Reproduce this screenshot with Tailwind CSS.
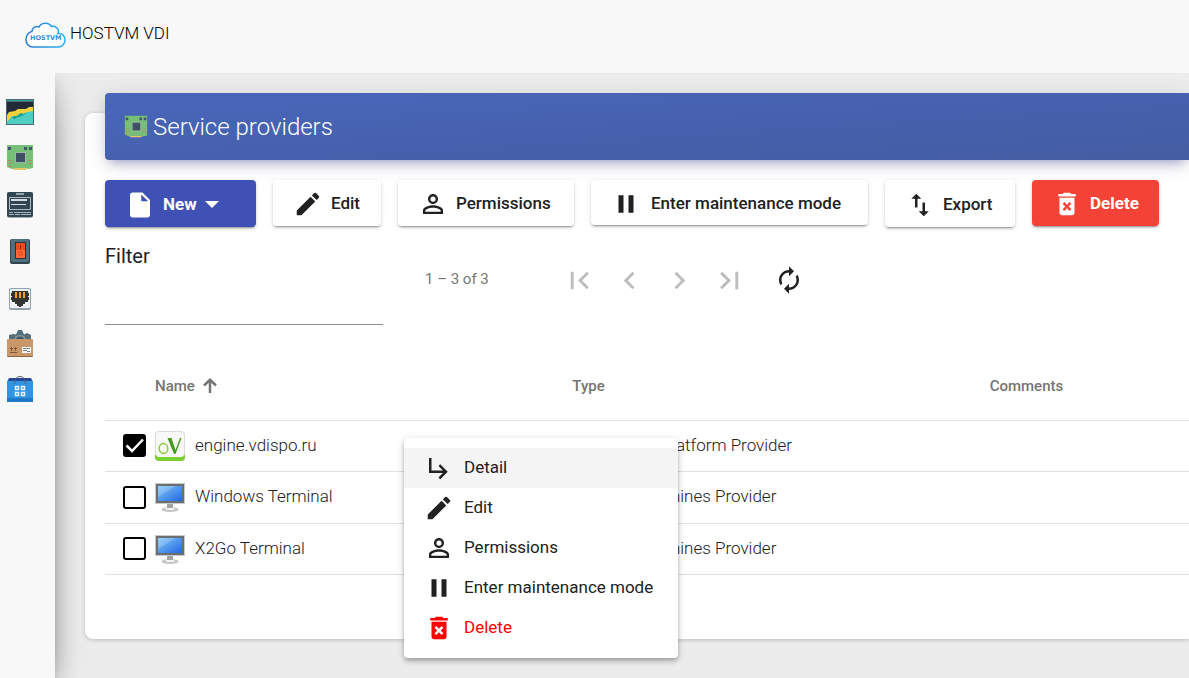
<!DOCTYPE html>
<html lang="en">
<head>
<meta charset="utf-8">
<meta name="viewport" content="width=device-width, initial-scale=1">
<title>HOSTVM VDI</title>
<script src="https://cdn.jsdelivr.net/npm/@tailwindcss/browser@4"></script>
</head>
<body class="flex min-h-screen flex-col overflow-x-hidden bg-[#f8f8f8] font-['Roboto',sans-serif] text-[17px] font-light text-[#212121]">

<!-- Shared symbols -->
<svg class="hidden" aria-hidden="true">
  <symbol id="i-file" viewBox="0 0 24 24"><path d="M6 2c-1.1 0-1.99.9-1.99 2L4 20c0 1.1.89 2 1.99 2H18c1.1 0 2-.9 2-2V8l-6-6H6zm7 7V3.5L18.5 9H13z"/></symbol>
  <symbol id="i-edit" viewBox="0 0 24 24"><path d="M3 17.25V21h3.75L17.81 9.94l-3.75-3.75L3 17.25zM20.71 7.04a1 1 0 0 0 0-1.41l-2.34-2.34a1 1 0 0 0-1.41 0l-1.83 1.83 3.75 3.75 1.83-1.83z"/></symbol>
  <symbol id="i-person" viewBox="0 0 24 24"><path d="M12 5.9a2.1 2.1 0 1 1 0 4.2 2.1 2.1 0 0 1 0-4.2m0 9c2.97 0 6.1 1.46 6.1 2.1v1.1H5.9V17c0-.64 3.13-2.1 6.1-2.1M12 4C9.79 4 8 5.79 8 8s1.79 4 4 4 4-1.79 4-4-1.79-4-4-4zm0 9c-2.67 0-8 1.34-8 4v3h16v-3c0-2.66-5.33-4-8-4z"/></symbol>
  <symbol id="i-pause" viewBox="0 0 24 24"><path d="M6 19h4V5H6v14zm8-14v14h4V5h-4z"/></symbol>
  <symbol id="i-swap" viewBox="0 0 24 24"><path d="M16 17.01V10h-2v7.01h-3L15 21l4-3.99h-3zM9 3L5 6.99h3V14h2V6.99h3L9 3z"/></symbol>
  <symbol id="i-delete" viewBox="0 0 24 24"><path d="M6 19c0 1.1.9 2 2 2h8c1.1 0 2-.9 2-2V7H6v12zm2.46-7.12l1.41-1.41L12 12.59l2.12-2.12 1.41 1.41L13.41 14l2.12 2.12-1.41 1.41L12 15.41l-2.12 2.12-1.41-1.41L10.59 14l-2.13-2.12zM15.5 4l-1-1h-5l-1 1H5v2h14V4z"/></symbol>
  <symbol id="i-sub" viewBox="0 0 24 24"><path d="M19 15l-6 6-1.42-1.42L15.17 16H4V4h2v10h9.17l-3.59-3.58L13 9l6 6z"/></symbol>
  <symbol id="i-board" viewBox="0 0 28 28">
    <path d="M6 24h16l-2 2H8z" fill="#e8c56a"/>
    <path d="M1 1h26v23l-4 1-3-1H9l-3 1-5-2z" fill="#76bf77"/>
    <path d="M2 3h3v3H2zM18 3h3v3h-3zM23 3h3v3h-3z" fill="#41556b"/>
    <path d="M9 8h11v11H9z" fill="#9db8a8"/><path d="M10 9h9v9h-9z" fill="#3f5065"/>
    <path d="M2 16h4v1H2zM2 19h4v1H2zM2 22h4v1H2zM22 16h4v1h-4zM22 19h4v1h-4z" fill="#b58a6a"/>
  </symbol>
  <symbol id="i-monitor" viewBox="0 0 30 30">
    <ellipse cx="15" cy="27.500" rx="8.500" ry="2.500" fill="#c4c4c4"/><ellipse cx="15" cy="26.500" rx="4.500" ry="1.500" fill="#f3f3f3"/>
    <path d="M12 22h6v4h-6z" fill="#a2a2a2"/>
    <path d="M0 1h30v21H0z" fill="#c9c9c9"/><path d="M1 2h28v19H1z" fill="#6b6f72"/>
    <path d="M3 4h24v15H3z" fill="url(#g-screen)"/><path d="M3 4h18L3 15z" fill="#fff" opacity=".18"/>
  </symbol>
</svg>
<svg class="absolute size-0" aria-hidden="true">
  <linearGradient id="g-screen" x1="0" y1="0" x2="1" y2="1"><stop stop-color="#7fc6fb"/><stop offset="1" stop-color="#2368dd"/></linearGradient>
  <linearGradient id="g-cloud" x1="0" x2="1"><stop stop-color="#2f7bd0"/><stop offset="1" stop-color="#22b4f5"/></linearGradient>
</svg>

<header class="relative z-20 flex h-[73px] items-center gap-1 bg-[#f8f8f8] pb-1.5 pl-[25px]">
  <svg class="mt-[2px] h-[26px] w-[41px]" viewBox="0 0 41 26" role="img" aria-label="HOSTVM logo">
    <path d="M8 25C3.500 25 1 21.500 1 17.500 1 13.500 3.500 10 7 9.500 7 6 10.500 3.500 14 5 16 .5 23.500-.5 26.500 4.500 30 3.500 33.500 6 33.500 9.500c0 .8-.1 1.500-.5 2 4-.5 7 2.500 7 6.500s-3 7-7 7z" fill="#fff" stroke="url(#g-cloud)" stroke-width="1.500"/>
    <text x="5" y="18" font-family="DejaVu Sans, sans-serif" font-size="6.500" font-weight="700" fill="#2f8fe0">HOSTVM</text>
  </svg>
  <a href="#" class="text-black">HOSTVM VDI</a>
</header>

<div class="flex flex-1">
  <nav aria-label="Main" class="relative z-10 w-[55px] shrink-0 bg-[#f8f8f8] pt-[25px] pl-1.5 shadow-[0_16px_38px_-12px_rgba(0,0,0,0.56),0_4px_25px_0_rgba(0,0,0,0.12),0_8px_10px_-5px_rgba(0,0,0,0.2)]">
    <div class="flex h-[306px] flex-col justify-between">
      <a href="#" aria-label="Dashboard" class="block size-7"><svg viewBox="0 0 28 28">
        <path d="M0 1h28v26H0z" fill="#4a6670"/><path d="M1 2h26v1H1z" fill="#2fa79c"/><path d="M1 4h26v22H1z" fill="#222b35"/>
        <path d="M1 17l2-3 6-1 3-2h8l3-2h4v17H1z" fill="#f6d13c"/>
        <path d="M1 26v-2l5-6h5l3-3 3 1 4-2 6-1v13z" fill="#4fcdc2"/>
        <path d="M6 20l2-2 3 0 4-3 2 1 4-2-5 4-4 1-3 2z" fill="#1d9e8d"/>
      </svg></a>
      <a href="#" aria-label="Service providers" class="block size-7"><svg viewBox="0 0 28 28"><use href="#i-board"/></svg></a>
      <a href="#" aria-label="Authenticators" class="block size-7"><svg viewBox="0 0 28 28">
        <rect x="1" y="2" width="26" height="25" rx="2" fill="#a9b0b5"/><rect x="1" y="1" width="26" height="25" rx="2" fill="#324552"/>
        <path d="M10 2h8v2h-8z" fill="#93a3aa"/>
        <path d="M3.500 6.500h21v12h-21z" fill="#324552" stroke="#aebbc0"/>
        <path d="M5 8h16v2H5z" fill="#d5dde0"/><path d="M5 13h15v1H5z" fill="#d5dde0"/>
        <path d="M3 21h4v1H3zM8 21h17v1H8zM3 23h5v1H3zM9 23h5v1H9zM15 23h10v1H15z" fill="#a7b7be"/>
      </svg></a>
      <a href="#" aria-label="OS managers" class="block size-7"><svg viewBox="0 0 28 28">
        <rect x="4" y="2" width="20" height="25" rx="2" fill="#324450"/><rect x="5" y="2" width="18" height="23" rx="2" fill="#51707d"/>
        <path d="M9 5h11v17H9z" fill="#263238"/><path d="M10 6h9v7h-9z" fill="#e84d20"/><path d="M10 13h9v8h-9z" fill="#ff6838"/>
        <path d="M14 8h1v4h-1z" fill="#8e2c14"/><circle cx="14.500" cy="16.500" r="1.800" fill="none" stroke="#d63c17"/>
      </svg></a>
      <a href="#" aria-label="Connectivity" class="block size-7"><svg viewBox="0 -1 28 28">
        <rect x="3" y="4" width="22" height="22" rx="2" fill="#8fa3ad"/><rect x="4" y="5" width="20" height="19" rx="1" fill="#eef2f4"/>
        <path d="M6 7h16v2h1v3h-1v1h1v3h-1v2h-3v2h-2v2h-2v1h-2v-1h-2v-2H9v-2H6v-2H5v-3h1v-1H5V9h1z" fill="#343434"/>
        <path d="M9 8h2v6H9zM13 8h2v6h-2zM17 8h2v6h-2z" fill="#f5a11c"/>
      </svg></a>
      <a href="#" aria-label="Pools" class="block size-7"><svg viewBox="0 1 28 28">
        <path d="M3 11V6l4-1 3 .5L12 1h4l2 4.500L21 4l4 2v5z" fill="#546e7a"/><path d="M8 11a6 5 0 0 1 12 0z" fill="#8197a1"/><path d="M10 11a4 3.500 0 0 1 8 0z" fill="#415661"/>
        <rect x="1" y="11" width="26" height="17" rx="1" fill="#8f6241"/><rect x="1" y="10" width="26" height="17" rx="1" fill="#c8986a"/>
        <path d="M4 23h7v1H4zM5 18h1v4H5zM9 18h1v4H9zM4 19h3v1H4zM8 19h3v1H8z" fill="#80583a"/>
        <path d="M16 18h9v6h-9z" fill="#fafafa"/><path d="M17 19h7v1h-7zM17 21h4v1h-4zM21 22h3v1h-3z" fill="#6a7f88"/>
      </svg></a>
      <a href="#" aria-label="Tools" class="block size-7"><svg viewBox="0 0 28 28">
        <path d="M3 2h22l2 4H1z" fill="#27479b"/><path d="M1 5h26v20H1z" fill="#3094e0"/><path d="M1 22h26v4H1z" fill="#1c79c9"/>
        <path d="M9 8V5a5 4.500 0 0 1 10 0v3" fill="none" stroke="#56636e"/>
        <path d="M9.500 10.500h3v3h-3zM15.500 10.500h3v3h-3zM9.500 16.500h3v3h-3zM15.500 16.500h3v3h-3z" fill="none" stroke="#e4f3ff" stroke-width="1.500"/>
      </svg></a>
    </div>
  </nav>

  <main class="min-w-0 flex-1 bg-[#ececec] pt-10 pb-[39px] pl-[30px]">
    <section class="relative flow-root rounded-l-lg bg-white pb-16 pl-5 shadow-[0_1px_4px_0_rgba(0,0,0,0.2)]">
      <h1 class="-mt-5 flex h-[67px] items-center gap-[5px] rounded-l bg-linear-to-br from-[#4866bb] to-[#445da2] pl-[19px] text-2xl font-light text-white shadow-[0_4px_20px_0_rgba(0,0,0,0.14),0_7px_10px_-5px_rgba(60,72,180,0.4)]">
        <svg class="size-6" viewBox="0 0 28 28" aria-hidden="true"><use href="#i-board"/></svg>
        Service providers
      </h1>

      <div class="mt-5 flex items-start gap-[17px] font-medium whitespace-nowrap">
        <button type="button" class="flex h-[47px] min-w-[151px] items-center gap-2 rounded bg-[#3f51b5] pt-0.5 pl-5 font-bold text-white shadow-[0_3px_1px_-2px_rgba(0,0,0,0.2),0_2px_2px_0_rgba(0,0,0,0.14),0_1px_5px_0_rgba(0,0,0,0.12)]"><svg class="size-[30px] fill-current"><use href="#i-file"/></svg>New<svg class="h-[7px] w-[14px] fill-current" viewBox="0 0 14 7"><path d="M0 0h14L7 7z"/></svg></button>
        <button type="button" class="flex h-[46px] min-w-[108px] items-center gap-2 rounded bg-white pt-0.5 pl-5 shadow-[0_3px_1px_-2px_rgba(0,0,0,0.2),0_2px_2px_0_rgba(0,0,0,0.14),0_1px_5px_0_rgba(0,0,0,0.12)]"><svg class="size-[30px] fill-current"><use href="#i-edit"/></svg>Edit</button>
        <button type="button" class="flex h-[46px] min-w-[176px] items-center gap-2 rounded bg-white pt-0.5 pl-5 shadow-[0_3px_1px_-2px_rgba(0,0,0,0.2),0_2px_2px_0_rgba(0,0,0,0.14),0_1px_5px_0_rgba(0,0,0,0.12)]"><svg class="size-[30px] fill-current"><use href="#i-person"/></svg>Permissions</button>
        <button type="button" class="flex h-[45px] min-w-[277px] items-center gap-2.5 rounded bg-white pt-0.5 pl-5 shadow-[0_3px_1px_-2px_rgba(0,0,0,0.2),0_2px_2px_0_rgba(0,0,0,0.14),0_1px_5px_0_rgba(0,0,0,0.12)]"><svg class="size-[30px] fill-current"><use href="#i-pause"/></svg>Enter maintenance mode</button>
        <button type="button" class="flex h-[47px] min-w-[130px] items-center gap-2 rounded bg-white pt-0.5 pl-5 shadow-[0_3px_1px_-2px_rgba(0,0,0,0.2),0_2px_2px_0_rgba(0,0,0,0.14),0_1px_5px_0_rgba(0,0,0,0.12)]"><svg class="size-[30px] fill-current"><use href="#i-swap"/></svg>Export</button>
        <button type="button" class="flex h-[46px] min-w-[127px] items-center gap-2 rounded bg-[#f44336] pt-0.5 pl-5 font-bold text-white shadow-[0_3px_1px_-2px_rgba(0,0,0,0.2),0_2px_2px_0_rgba(0,0,0,0.14),0_1px_5px_0_rgba(0,0,0,0.12)]"><svg class="size-[30px] fill-current"><use href="#i-delete"/></svg>Delete</button>
      </div>

      <div class="mt-4 flex items-start">
        <div class="flex w-[278px] flex-col">
          <label for="filter" class="text-xl leading-[26px] font-normal">Filter</label>
          <input id="filter" type="text" class="h-14 border-b border-[#8c8c8c] bg-transparent pt-4 outline-none">
        </div>
        <span class="mt-[26px] ml-[42px] w-[129px] text-[15px] leading-5 font-normal text-[#757575]">1 – 3 of 3</span>
        <div class="mt-3 flex text-[#bdbdbd]">
          <button type="button" disabled aria-label="First page" class="grid size-[50px] place-items-center"><svg class="size-[35px] fill-current" viewBox="0 0 24 24"><path d="M18.410 16.590L13.820 12l4.590-4.590L17 6l-6 6 6 6zM6 6h2v12H6z"/></svg></button>
          <button type="button" disabled aria-label="Previous page" class="grid size-[50px] place-items-center"><svg class="size-[35px] fill-current" viewBox="0 0 24 24"><path d="M15.410 7.410L14 6l-6 6 6 6 1.410-1.410L10.830 12z"/></svg></button>
          <button type="button" disabled aria-label="Next page" class="grid size-[50px] place-items-center"><svg class="size-[35px] fill-current" viewBox="0 0 24 24"><path d="M10 6L8.590 7.410 13.170 12l-4.580 4.590L10 18l6-6z"/></svg></button>
          <button type="button" disabled aria-label="Last page" class="grid size-[50px] place-items-center"><svg class="size-[35px] fill-current" viewBox="0 0 24 24"><path d="M5.590 7.410L10.180 12l-4.590 4.590L7 18l6-6-6-6zM16 6h2v12h-2z"/></svg></button>
          <button type="button" aria-label="Reload" class="ml-2.5 grid size-[50px] place-items-center text-[#212121]"><svg class="size-[30px] fill-current" viewBox="0 0 24 24"><path d="M12 6v3l4-4-4-4v3c-4.420 0-8 3.580-8 8 0 1.570.46 3.030 1.240 4.260L6.700 14.800c-.45-.83-.7-1.790-.7-2.800 0-3.310 2.690-6 6-6zm6.760 1.740L17.300 9.200c.44.84.7 1.790.7 2.800 0 3.310-2.690 6-6 6v-3l-4 4 4 4v-3c4.420 0 8-3.580 8-8 0-1.570-.46-3.030-1.240-4.260z"/></svg></button>
        </div>
      </div>

      <table class="mt-[23px] w-full table-fixed border-collapse text-left">
        <thead>
          <tr class="h-[72px] border-b border-[#e0e0e0] text-[15px] text-[#757575]">
            <th class="w-[50px]"></th>
            <th scope="col" class="w-[38.5%] pt-1 font-medium"><button type="button" class="flex items-center gap-2">Name<svg class="h-[15px] w-[14px] fill-none stroke-current stroke-[2.5]" viewBox="0 0 14 15"><path d="M7 15V2M1 7.500L7 1.800l6 5.700"/></svg></button></th>
            <th scope="col" class="w-[38.5%] pt-1 font-medium">Type</th>
            <th scope="col" class="pt-1 font-medium">Comments</th>
          </tr>
        </thead>
        <tbody>
          <tr class="h-[51px] border-b border-[#e0e0e0]">
            <td class="pl-[18px]"><span class="grid size-[23px]"><input type="checkbox" checked aria-label="Select engine.vdispo.ru" class="col-start-1 row-start-1 size-[23px] appearance-none rounded-[3px] border-2 border-black checked:bg-black"><svg class="pointer-events-none col-start-1 row-start-1 size-[23px] fill-none stroke-white stroke-[2.5]" viewBox="0 0 23 23"><path d="M3.500 11.500l5.500 5.500L20 5.500"/></svg></span></td>
            <td><span class="flex items-center gap-2.5"><svg class="size-[30px]" viewBox="0 0 30 30" aria-hidden="true"><rect width="30" height="30" rx="4" fill="#dcdcdc"/><path d="M0 24h30v2a4 4 0 0 1-4 4H4a4 4 0 0 1-4-4z" fill="#79d12f"/><path d="M1 4a3 3 0 0 1 3-3h22a3 3 0 0 1 3 3v19a3 3 0 0 1-3 3H4a3 3 0 0 1-3-3z" fill="#f8f8f8"/><ellipse cx="8.500" cy="17.500" rx="4.300" ry="5" fill="none" stroke="#8cc83c" stroke-width="1.400"/><path d="M12.500 7h4l4 12L25 7h1.500L20.500 23H19z" fill="#479a1e"/></svg>engine.vdispo.ru</span></td>
            <td>oVirt/RHEV Platform Provider</td>
            <td></td>
          </tr>
          <tr class="h-[52px] border-b border-[#e0e0e0]">
            <td class="pl-[18px]"><input type="checkbox" aria-label="Select Windows Terminal" class="block size-[23px] appearance-none rounded-[3px] border-2 border-black checked:bg-black"></td>
            <td><span class="flex items-center gap-2.5"><svg class="size-[30px]" aria-hidden="true"><use href="#i-monitor"/></svg>Windows Terminal</span></td>
            <td>Static IP Machines Provider</td>
            <td></td>
          </tr>
          <tr class="h-[51px] border-b border-[#e0e0e0]">
            <td class="pl-[18px]"><input type="checkbox" aria-label="Select X2Go Terminal" class="block size-[23px] appearance-none rounded-[3px] border-2 border-black checked:bg-black"></td>
            <td><span class="flex items-center gap-2.5"><svg class="size-[30px]" aria-hidden="true"><use href="#i-monitor"/></svg>X2Go Terminal</span></td>
            <td>Static IP Machines Provider</td>
            <td></td>
          </tr>
        </tbody>
      </table>

      <!-- Context menu over the table -->
      <div role="menu" class="absolute top-[325px] left-[319px] z-20 w-[274px] rounded bg-white py-2.5 font-normal whitespace-nowrap shadow-[0_2px_4px_-1px_rgba(0,0,0,0.2),0_4px_5px_0_rgba(0,0,0,0.14),0_1px_10px_0_rgba(0,0,0,0.12)]">
        <button type="button" role="menuitem" class="flex h-10 w-full items-center gap-2.5 bg-[#f4f4f4] pl-5"><svg class="size-[30px] fill-current"><use href="#i-sub"/></svg>Detail</button>
        <button type="button" role="menuitem" class="flex h-10 w-full items-center gap-2.5 pl-5"><svg class="size-[30px] fill-current"><use href="#i-edit"/></svg>Edit</button>
        <button type="button" role="menuitem" class="flex h-10 w-full items-center gap-2.5 pl-5"><svg class="size-[30px] fill-current"><use href="#i-person"/></svg>Permissions</button>
        <button type="button" role="menuitem" class="flex h-10 w-full items-center gap-2.5 pl-5"><svg class="size-[30px] fill-current"><use href="#i-pause"/></svg>Enter maintenance mode</button>
        <button type="button" role="menuitem" class="flex h-10 w-full items-center gap-2.5 pl-5 text-[#ff0000]"><svg class="size-[30px] fill-current"><use href="#i-delete"/></svg>Delete</button>
      </div>
    </section>
  </main>
</div>
</body>
</html>
